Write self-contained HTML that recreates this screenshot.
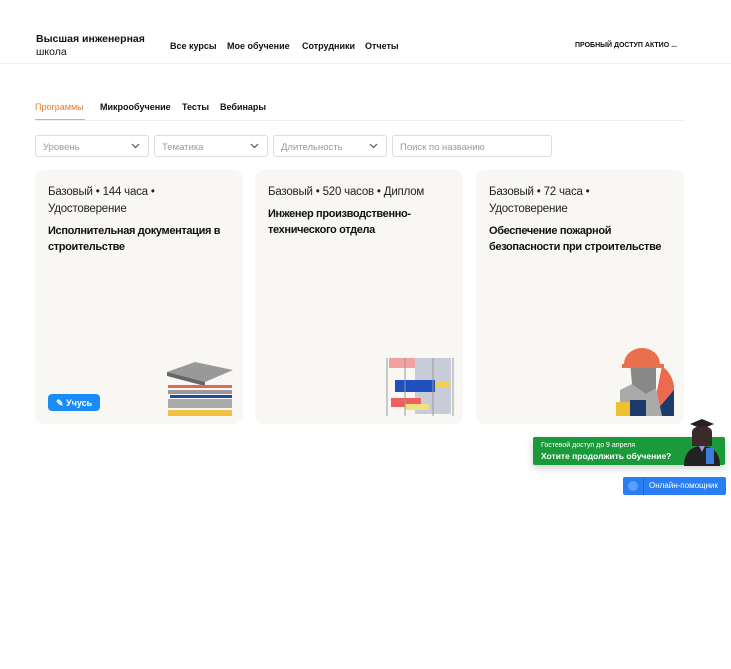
<!DOCTYPE html>
<html><head><meta charset="utf-8"><style>
*{box-sizing:border-box;margin:0;padding:0}
body{width:731px;height:669px;background:#fff;font-family:"Liberation Sans",sans-serif;color:#111;position:relative;overflow:hidden}
.a{position:absolute}
.logo{left:36px;top:33px;font-size:10.5px;line-height:13px}
.logo b{font-weight:bold}
.nav{top:41px;font-size:9px;font-weight:bold;white-space:nowrap}
.hl{left:0;top:63px;width:731px;height:1px;background:#f0f0f0}
.tab{top:102px;font-size:9px;font-weight:bold;white-space:nowrap}
.tl{left:35px;top:120px;width:649px;height:1px;background:#eee}
.sel{top:135px;height:22px;border:1px solid #ddd;border-radius:3px;font-size:9.5px;color:#999;padding:6px 7px}
.sel svg{position:absolute;right:8px;top:7px}
.card{top:170px;width:208px;height:254px;background:#f8f7f4;border-radius:9px;padding:14px 13px}
.meta{font-size:11.5px;line-height:17px;color:#222;letter-spacing:-0.2px}
.title{font-size:11px;line-height:16px;font-weight:bold;margin-top:5px;letter-spacing:-0.35px;width:190px}
</style></head><body>
<div class="a logo"><b>Высшая инженерная</b><br>школа</div>
<div class="a nav" style="left:170px">Все курсы</div>
<div class="a nav" style="left:227px">Мое обучение</div>
<div class="a nav" style="left:302px">Сотрудники</div>
<div class="a nav" style="left:365px">Отчеты</div>
<div class="a" style="left:575px;top:42px;font-size:7px;font-weight:bold;white-space:nowrap">ПРОБНЫЙ ДОСТУП АКТИО ...</div>
<div class="a hl"></div>
<div class="a tab" style="left:35px;color:#f07a2a;font-weight:normal">Программы</div>
<div class="a" style="left:35px;top:119px;width:50px;height:2px;background:#f5a46a"></div>
<div class="a tab" style="left:100px">Микрообучение</div>
<div class="a tab" style="left:182px">Тесты</div>
<div class="a tab" style="left:220px">Вебинары</div>
<div class="a tl"></div>
<div class="a sel" style="left:35px;width:114px">Уровень<svg width="9" height="6"><path d="M1 1l3.5 3.5L8 1" stroke="#555" fill="none" stroke-width="1.2"/></svg></div>
<div class="a sel" style="left:154px;width:114px">Тематика<svg width="9" height="6"><path d="M1 1l3.5 3.5L8 1" stroke="#555" fill="none" stroke-width="1.2"/></svg></div>
<div class="a sel" style="left:273px;width:114px">Длительность<svg width="9" height="6"><path d="M1 1l3.5 3.5L8 1" stroke="#555" fill="none" stroke-width="1.2"/></svg></div>
<div class="a sel" style="left:392px;width:160px">Поиск по названию</div>

<div class="a card" style="left:35px"><div class="meta">Базовый • 144 часа •<br>Удостоверение</div><div class="title">Исполнительная документация в строительстве</div>
<div class="a" style="left:13px;top:224px;width:52px;height:17px;background:#1b8cf5;border-radius:4px;color:#fff;font-size:9px;font-weight:bold;padding:4px 0 0 8px">✎ Учусь</div>
<svg class="a" style="left:130px;top:190px" width="70" height="60"><polygon points="2,12 30,2 68,10 40,22" fill="#999"/><polygon points="2,12 40,22 40,26 2,16" fill="#666"/><rect x="3" y="25" width="64" height="3" fill="#e06a4f"/><rect x="3" y="30" width="64" height="4" fill="#999"/><rect x="5" y="35" width="62" height="3" fill="#1f4aa0"/><rect x="3" y="39" width="64" height="9" fill="#aaa"/><rect x="3" y="50" width="64" height="6" fill="#f0c040"/></svg>
</div>
<div class="a card" style="left:255px"><div class="meta">Базовый • 520 часов • Диплом</div><div class="title">Инженер производственно-технического отдела</div>
<svg class="a" style="left:130px;top:186px" width="70" height="62"><rect x="4" y="2" width="44" height="10" fill="#f2a0a0"/><rect x="30" y="2" width="36" height="56" fill="#c8ccd8"/><rect x="10" y="24" width="40" height="12" fill="#2050c0"/><rect x="50" y="26" width="14" height="5" fill="#f0d050"/><rect x="6" y="42" width="30" height="9" fill="#f06060"/><rect x="20" y="48" width="24" height="6" fill="#f0e080"/><path d="M2 2v58M20 2v58M48 2v58M68 2v58" stroke="#999"/></svg>
</div>
<div class="a card" style="left:476px"><div class="meta">Базовый • 72 часа •<br>Удостоверение</div><div class="title">Обеспечение пожарной безопасности при строительстве</div>
<svg class="a" style="left:136px;top:174px" width="64" height="72"><path d="M50 22a30 30 0 0 1 12 20v30H40z" fill="#ec6a4e"/><path d="M62 46v26H40z" fill="#1c3a6c"/><path d="M8 72V46l16-8 20 6 6 28z" fill="#aaa"/><path d="M18 18h26v26l-10 6-14-10z" fill="#888"/><path d="M12 20a18 16 0 0 1 36 0h4v4H10v-4z" fill="#e8704e"/><rect x="4" y="58" width="14" height="14" fill="#f0c030"/><rect x="18" y="56" width="16" height="16" fill="#1c3a6c"/></svg>
</div>

<div class="a" style="left:533px;top:437px;width:192px;height:28px;background:#1a9a3a;border-radius:2px;box-shadow:0 3px 8px rgba(0,0,0,.2);color:#fff;padding:5px 8px">
<div style="font-size:7px">Гостевой доступ до 9 апреля</div><div style="font-size:8.5px;font-weight:bold;margin-top:2px">Хотите продолжить обучение?</div></div>
<svg class="a" style="left:672px;top:418px" width="50" height="48"><path d="M18 6l12-5 12 5-12 5z" fill="#222"/><circle cx="30" cy="16" r="7" fill="#e9b99c"/><path d="M20 14c0-8 20-8 20 0v14h-20z" fill="#3a2a2a"/><path d="M12 48c0-14 8-20 18-20s18 6 18 20z" fill="#222"/><rect x="34" y="30" width="8" height="16" fill="#3a7be0"/><path d="M27 28h6l-3 6z" fill="#a78ee0"/></svg>
<div class="a" style="left:623px;top:477px;width:103px;height:18px;background:#2a7ef3;border-radius:2px;color:#fff;font-size:8px;padding:4px 0 0 26px">Онлайн-помощник
<div class="a" style="left:5px;top:4px;width:10px;height:10px;border-radius:50%;background:#5aa0f8"></div><div class="a" style="left:20px;top:0;width:1px;height:18px;background:#1f66d0"></div></div>
</body></html>
